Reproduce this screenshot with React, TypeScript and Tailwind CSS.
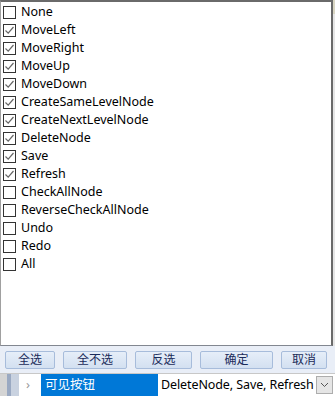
const items: [string, boolean][] = [
  ['None', false],
  ['MoveLeft', true],
  ['MoveRight', true],
  ['MoveUp', true],
  ['MoveDown', true],
  ['CreateSameLevelNode', true],
  ['CreateNextLevelNode', true],
  ['DeleteNode', true],
  ['Save', true],
  ['Refresh', true],
  ['CheckAllNode', false],
  ['ReverseCheckAllNode', false],
  ['Undo', false],
  ['Redo', false],
  ['All', false],
]

const buttons: [string, string][] = [
  ['全选', 'w-[50px]'],
  ['全不选', 'w-[64px]'],
  ['反选', 'w-[57px]'],
  ['确定', 'w-[73px]'],
  ['取消', 'w-[46px]'],
]

function Box({ checked }: { checked: boolean }) {
  return (
    <span className="w-[13px] h-[13px] border border-[#333333] bg-white flex items-center justify-center shrink-0">
      {checked && (
        <svg width="11" height="11" viewBox="0 0 11 11">
          <path d="M1.5 5.5 L4.2 8.2 L9.5 2" fill="none" stroke="#666666" strokeWidth="1.2" />
        </svg>
      )}
    </span>
  )
}

export default function App() {
  return (
    <div
      className="w-[335px] h-[396px] flex flex-col bg-[#f0f0f0] overflow-hidden text-[12.5px] text-black"
      style={{ fontFamily: '"Noto Sans", "Noto Sans CJK SC", sans-serif' }}
    >
      <div className="flex h-[346px]">
        <div className="flex-1 bg-white border-t-2 border-l border-b border-r-2 border-t-[#6a6a6a] border-l-[#a0a0a0] border-b-[#828790] border-r-[#6a6a6a] pt-[1px]">
          {items.map(([label, checked]) => (
            <div key={label} className="h-[18px] flex items-center gap-[5px] pl-[2px] leading-none">
              <Box checked={checked} />
              <span>{label}</span>
            </div>
          ))}
        </div>
        <div className="w-[2px] flex flex-col bg-[#e6e6e6]">
          <div className="h-[14px] bg-[#d9d6c3]" />
        </div>
      </div>
      <div className="h-[27px] bg-[#e9eef7] flex items-center gap-[8px] pl-[5px] pt-[1px]">
        {buttons.map(([label, w]) => (
          <div
            key={label}
            className={`${w} h-[18px] border border-[#a7bcdb] rounded-[2px] bg-gradient-to-b from-[#e6eef9] to-[#d3e0f1] flex items-center justify-center text-[12px] text-[#1a2b5a]`}
          >
            {label}
          </div>
        ))}
      </div>
      <div className="flex-1 flex items-stretch bg-white border-t border-[#c8c8c8]">
        <div className="w-[7px] bg-[#d4d4d4]" />
        <div className="w-[4px] bg-[#9aa9c2]" />
        <div className="w-[8px] bg-[#c9d2e0]" />
        <div className="w-[22px] flex items-center justify-center text-[#9a9a9a] text-[13px] pr-[4px]">›</div>
        <div className="w-[117px] bg-[#0078d7] text-white flex items-center pl-[4px]">可见按钮</div>
        <div className="flex-1 flex items-center pl-[3px] whitespace-nowrap overflow-hidden tracking-[-0.1px]">DeleteNode, Save, Refresh</div>
        <div className="w-[17px] border border-[#adadad] bg-[#e5e5e5] flex items-center justify-center mr-[2px] my-[2px]">
          <svg width="9" height="6" viewBox="0 0 9 6">
            <path d="M1 1 L4.5 4.5 L8 1" fill="none" stroke="#555555" strokeWidth="1" />
          </svg>
        </div>
      </div>
    </div>
  )
}
